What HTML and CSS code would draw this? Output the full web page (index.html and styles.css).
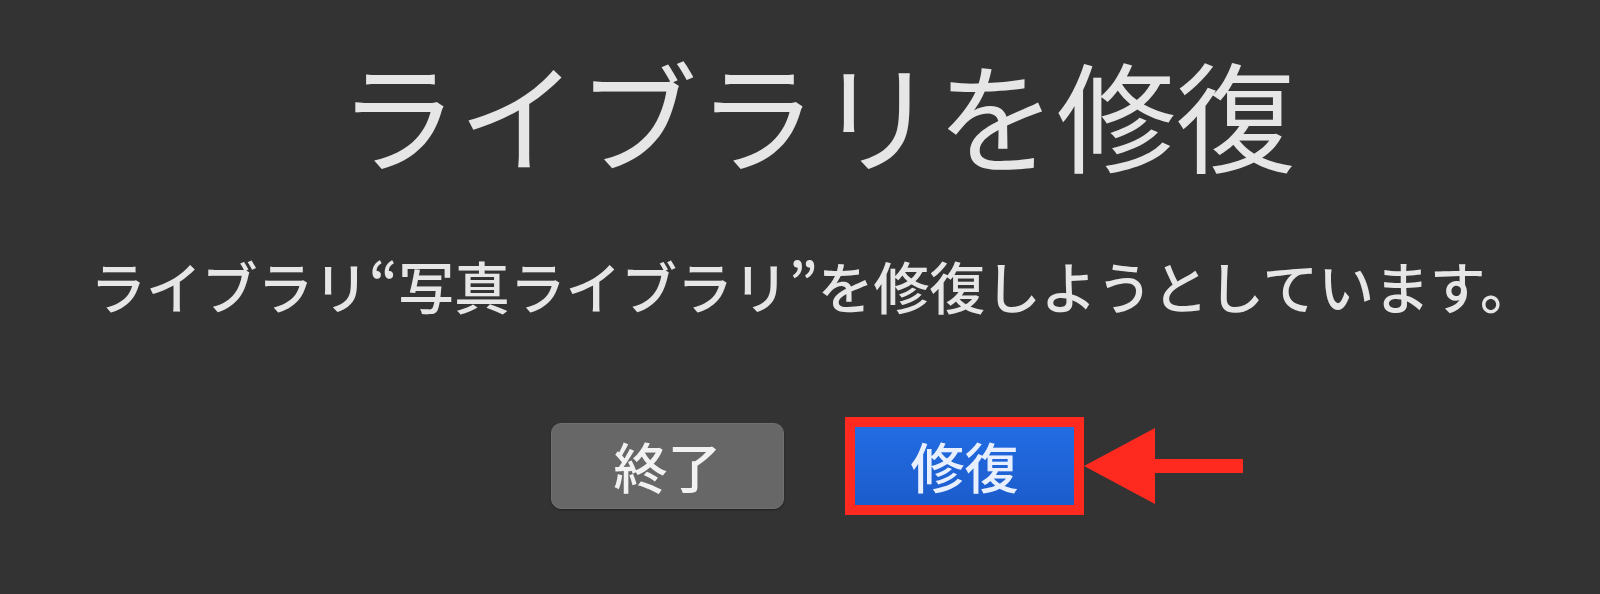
FILE: index.html
```html
<!DOCTYPE html>
<html lang="ja">
<head>
  <meta charset="UTF-8" />
  <title>ライブラリを修復</title>
  <link rel="stylesheet" href="styles.css">
</head>
<body>
  <div class="dialog">
    <h1 class="title">ライブラリを修復</h1>
    <p class="message">ライブラリ“写真ライブラリ”を修復しようとしています。</p>
    <div class="buttons">
      <button class="btn btn-quit">終了</button>
      <div class="highlight">
        <button class="btn btn-repair">修復</button>
        <svg class="arrow" width="160" height="78" viewBox="0 0 160 78">
          <polygon points="0,39 71,1 71,77" fill="#ff2a1f" />
          <rect x="70" y="32" width="89" height="14" fill="#ff2a1f" />
        </svg>
      </div>
    </div>
  </div>
</body>
</html>
```

FILE: styles.css
```css
html, body {
  margin: 0;
  height: 100%;
}
body {
  background: #333333;
  font-family: "Noto Sans CJK JP", "Noto Sans", sans-serif;
  color: #e6e6e6;
}
.dialog {
  display: flex;
  flex-direction: column;
  align-items: center;
  padding-top: 40px;
}
.title {
  margin: 0 0 0 34px;
  font-size: 119.6px;
  font-weight: 400;
  line-height: 1.2;
  letter-spacing: 0;
}
.message {
  margin: 68px 0 0 26px;
  font-size: 55.8px;
  font-weight: 500;
  line-height: 1.2;
}
.buttons {
  display: flex;
  align-items: center;
  gap: 61px;
  margin: 99px 0 0 35px;
}
.btn {
  font-family: inherit;
  font-weight: 500;
  font-size: 54px;
  color: #f2f2f2;
  border: none;
  padding: 0;
  line-height: 1;
}
.btn-quit {
  width: 233px;
  height: 86px;
  background: #676767;
  border-radius: 10px;
  border: 1px solid #707070;
  box-shadow: 0 1px 2px rgba(0, 0, 0, 0.4);
}
.highlight {
  position: relative;
  border: 10px solid #ff2a1f;
  display: flex;
}
.btn-repair {
  width: 219px;
  height: 78px;
  background: linear-gradient(#226ce3, #1c5ccc);
  color: #e8f0ff;
}
.arrow {
  position: absolute;
  left: 229px;
  top: 0;
}
```
